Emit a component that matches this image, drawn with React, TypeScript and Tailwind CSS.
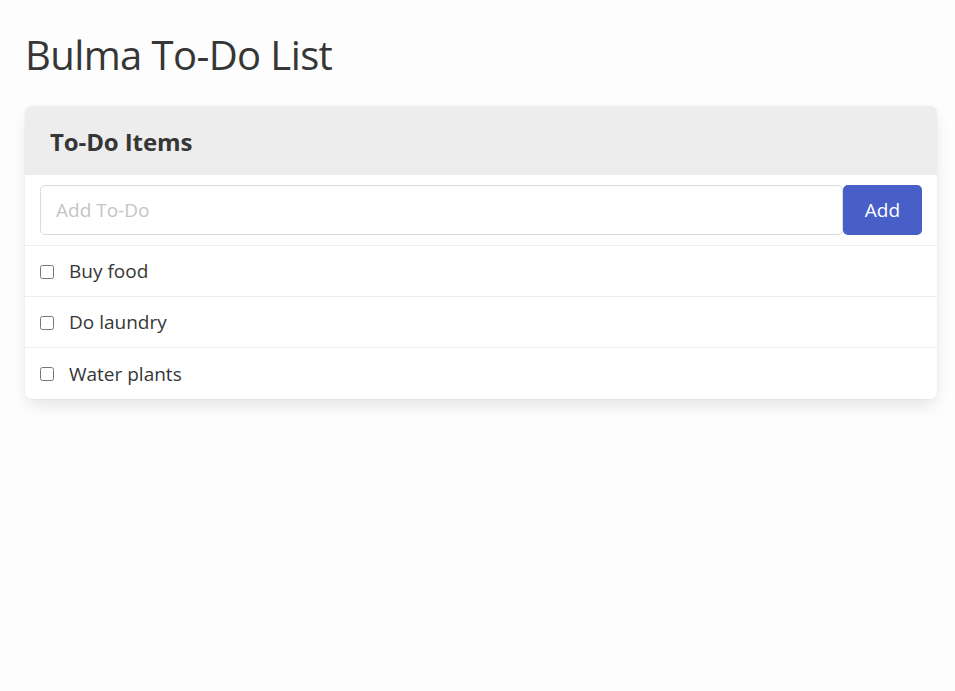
import React from "react";

const items = ["Buy food", "Do laundry", "Water plants"];

export default function App() {
  return (
    <div
      className="min-h-screen bg-[#fdfdfd] pt-8 pl-[25px] pr-[18px] text-[#363636]"
      style={{ fontFamily: '"Open Sans", "Noto Sans", sans-serif' }}
    >
      <h1 className="text-[40px] leading-[45px] font-medium mb-[29px] tracking-[-0.6px]">
        Bulma To-Do List
      </h1>
      <div className="bg-white rounded-[7px] shadow-[0_8px_16px_-2px_rgba(10,10,10,0.1),0_0_0_1px_rgba(10,10,10,0.02)]">
        <div className="h-[69px] bg-[#ededed] rounded-t-[7px] flex items-center px-[25px] pt-[3px]">
          <h2 className="text-[24px] font-bold tracking-[-0.1px]">To-Do Items</h2>
        </div>
        <div className="h-[71px] flex items-center px-[15px] border-b border-[#ededed]">
          <input
            className="flex-1 h-[50px] border border-[#dbdbdb] rounded-[5px] px-[15px] text-[19px] text-[#363636] placeholder:text-[#c4c4c4] outline-none bg-white"
            placeholder="Add To-Do"
          />
          <button className="h-[50px] w-[79px] bg-[#485fc7] text-white text-[19px] rounded-[5px] flex items-center justify-center">
            Add
          </button>
        </div>
        {items.map((t, i) => (
          <div
            key={t}
            className={
              "h-[51px] flex items-center px-[15px] gap-[15px] pt-[1px] " +
              (i < items.length - 1 ? "border-b border-[#ededed]" : "")
            }
          >
            <input type="checkbox" className="w-[14px] h-[14px]" />
            <span className="text-[19px] text-[#363636]">{t}</span>
          </div>
        ))}
      </div>
    </div>
  );
}
